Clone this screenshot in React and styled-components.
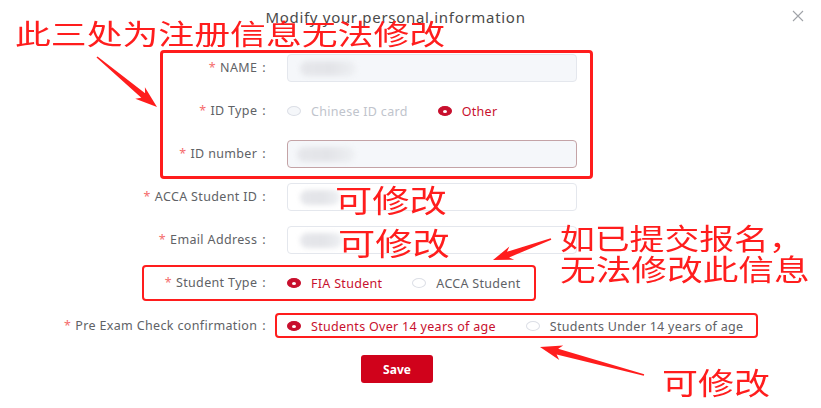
import React from 'react';
import styled, { createGlobalStyle } from 'styled-components';

const GlobalStyle = createGlobalStyle`
  html, body {
    margin: 0;
    padding: 0;
    background: #ffffff;
  }
  body {
    font-family: "Noto Sans", "Noto Sans CJK SC", sans-serif;
  }
`;

const Page = styled.div`
  position: relative;
  width: 821px;
  height: 408px;
  overflow: hidden;
  background: #ffffff;
`;

const Header = styled.div`
  display: flex;
  align-items: center;
  height: 32px;
`;

const Title = styled.div`
  flex: 1;
  text-align: center;
  font-size: 15px;
  color: #4a4a4a;
  letter-spacing: 0.7px;
  padding-top: 2px;
`;

const Close = styled.div`
  width: 14px;
  height: 14px;
  margin-right: 16px;
  color: #a0a3a8;
  display: flex;
  align-items: center;
  justify-content: center;
`;

const Form = styled.div`
  display: grid;
  grid-template-columns: 266px auto;
  column-gap: 21px;
  row-gap: 15px;
  margin-top: 22px;
  align-items: center;
`;

const Label = styled.div`
  text-align: right;
  font-size: 12.5px;
  color: #606266;
  letter-spacing: 0.35px;
  white-space: nowrap;
  line-height: 28px;

  &::before {
    content: '*';
    color: #f56c6c;
    margin-right: 4px;
  }

  &::after {
    content: ':';
    margin-left: 5px;
  }
`;

const Input = styled.div`
  box-sizing: border-box;
  width: 290px;
  height: 28px;
  border: 1px solid ${p => p.$border || '#e4e7ed'};
  border-radius: 4px;
  background: ${p => (p.$disabled ? '#f5f7fa' : '#ffffff')};
  display: flex;
  align-items: center;
  padding-left: ${p => p.$pad || 12}px;
`;

const Blur = styled.span`
  display: block;
  width: ${p => p.$w}px;
  height: 15px;
  background: linear-gradient(90deg, #e6e7eb 0%, #e3e4e8 55%, #eef0f3 100%);
  filter: blur(2.5px);
  border-radius: 8px;
`;

const RadioGroup = styled.div`
  display: flex;
  align-items: center;
  height: 28px;
`;

const Option = styled.label`
  display: flex;
  align-items: center;
  margin-right: 30px;
  font-size: 12.5px;
  letter-spacing: 0.3px;
  white-space: nowrap;
  color: ${p => (p.$checked ? '#c8102e' : p.$disabled ? '#c0c4cc' : '#606266')};
`;

const Dot = styled.span`
  box-sizing: border-box;
  width: 14px;
  height: 10px;
  border-radius: 50%;
  margin-right: 10px;
  border: 1px solid ${p => (p.$checked ? '#c8102e' : '#dcdfe6')};
  background: ${p => (p.$checked ? '#c8102e' : p.$disabled ? '#f5f7fa' : '#ffffff')};
  display: flex;
  align-items: center;
  justify-content: center;

  &::after {
    content: '';
    width: 4px;
    height: 3px;
    border-radius: 50%;
    background: #ffffff;
    display: ${p => (p.$checked ? 'block' : 'none')};
  }
`;

const Footer = styled.div`
  display: flex;
  justify-content: center;
  padding-right: 27px;
  margin-top: 15px;
`;

const SaveButton = styled.button`
  width: 72px;
  height: 28px;
  border: none;
  border-radius: 3px;
  background: #d0021b;
  color: #ffffff;
  font-family: inherit;
  font-size: 12px;
  font-weight: 700;
  cursor: pointer;
`;

/* annotations drawn on top of the screenshot */
const MarkBox = styled.div`
  position: absolute;
  box-sizing: border-box;
  left: ${p => p.$x}px;
  top: ${p => p.$y}px;
  width: ${p => p.$w}px;
  height: ${p => p.$h}px;
  border: ${p => p.$b || 2}px solid #ff1d1d;
  border-radius: 4px;
  pointer-events: none;
`;

const Note = styled.div`
  position: absolute;
  left: ${p => p.$x}px;
  top: ${p => p.$y}px;
  font-family: "Noto Sans CJK SC", sans-serif;
  font-size: ${p => p.$size || 30}px;
  line-height: 1;
  color: #ff1d1d;
  white-space: nowrap;
  transform: scaleX(${p => p.$sx || 1.2});
  transform-origin: left top;
  pointer-events: none;
`;

const Arrows = styled.svg`
  position: absolute;
  inset: 0;
  pointer-events: none;
`;

function arrowPoints([x1, y1], [x2, y2], headLen = 20, headW = 15, shaftW = 6) {
  const dx = x2 - x1;
  const dy = y2 - y1;
  const len = Math.hypot(dx, dy);
  const ux = dx / len;
  const uy = dy / len;
  const nx = -uy;
  const ny = ux;
  const bx = x2 - ux * headLen;
  const by = y2 - uy * headLen;
  const cx = x2 - ux * (headLen - 4);
  const cy = y2 - uy * (headLen - 4);
  const pts = [
    [x1 + nx * 0.8, y1 + ny * 0.8],
    [cx + nx * shaftW / 2, cy + ny * shaftW / 2],
    [bx + nx * headW / 2, by + ny * headW / 2],
    [x2, y2],
    [bx - nx * headW / 2, by - ny * headW / 2],
    [cx - nx * shaftW / 2, cy - ny * shaftW / 2],
    [x1 - nx * 0.8, y1 - ny * 0.8],
  ];
  return pts.map(p => p.map(v => v.toFixed(1)).join(',')).join(' ');
}

const Radio = ({ checked, disabled, children }) => (
  <Option $checked={checked} $disabled={disabled}>
    <Dot $checked={checked} $disabled={disabled} />
    {children}
  </Option>
);

export default function App() {
  return (
    <>
      <GlobalStyle />
      <Page>
        <Header>
          <Title>Modify your personal information</Title>
          <Close>
            <svg width="12" height="12" viewBox="0 0 12 12">
              <path d="M1 1L11 11M11 1L1 11" stroke="currentColor" strokeWidth="1.1" />
            </svg>
          </Close>
        </Header>

        <Form>
          <Label>NAME</Label>
          <Input $disabled>
            <Blur $w={56} />
          </Input>

          <Label>ID Type</Label>
          <RadioGroup>
            <Radio disabled>Chinese ID card</Radio>
            <Radio checked>Other</Radio>
          </RadioGroup>

          <Label>ID number</Label>
          <Input $disabled $border="#c4a3a6" $pad={9}>
            <Blur $w={58} />
          </Input>

          <Label>ACCA Student ID</Label>
          <Input>
            <Blur $w={40} />
          </Input>

          <Label>Email Address</Label>
          <Input>
            <Blur $w={42} />
          </Input>

          <Label>Student Type</Label>
          <RadioGroup>
            <Radio checked>FIA Student</Radio>
            <Radio>ACCA Student</Radio>
          </RadioGroup>

          <Label>Pre Exam Check confirmation</Label>
          <RadioGroup>
            <Radio checked>Students Over 14 years of age</Radio>
            <Radio>Students Under 14 years of age</Radio>
          </RadioGroup>
        </Form>

        <Footer>
          <SaveButton>Save</SaveButton>
        </Footer>

        <MarkBox $x={160} $y={50} $w={433} $h={129} $b={3} />
        <MarkBox $x={142} $y={265} $w={394} $h={36} />
        <MarkBox $x={275} $y={313} $w={483} $h={25} />

        <Arrows width="821" height="408" viewBox="0 0 821 408">
          <polygon points={arrowPoints([97, 57], [157, 107], 22, 15, 6)} fill="#ff1d1d" />
          <polygon points={arrowPoints([551, 239], [493, 260], 20, 14, 6)} fill="#ff1d1d" />
          <polygon points={arrowPoints([644, 375], [540, 347], 22, 15, 6)} fill="#ff1d1d" />
        </Arrows>

        <Note $x={15} $y={19} $size={28} $sx={1.28}>此三处为注册信息无法修改</Note>
        <Note $x={335} $y={183} $size={31}>可修改</Note>
        <Note $x={338} $y={226} $size={31}>可修改</Note>
        <Note $x={560} $y={223} $size={29}>如已提交报名，</Note>
        <Note $x={560} $y={254} $size={29} $sx={1.23}>无法修改此信息</Note>
        <Note $x={662} $y={366} $size={30}>可修改</Note>
      </Page>
    </>
  );
}
